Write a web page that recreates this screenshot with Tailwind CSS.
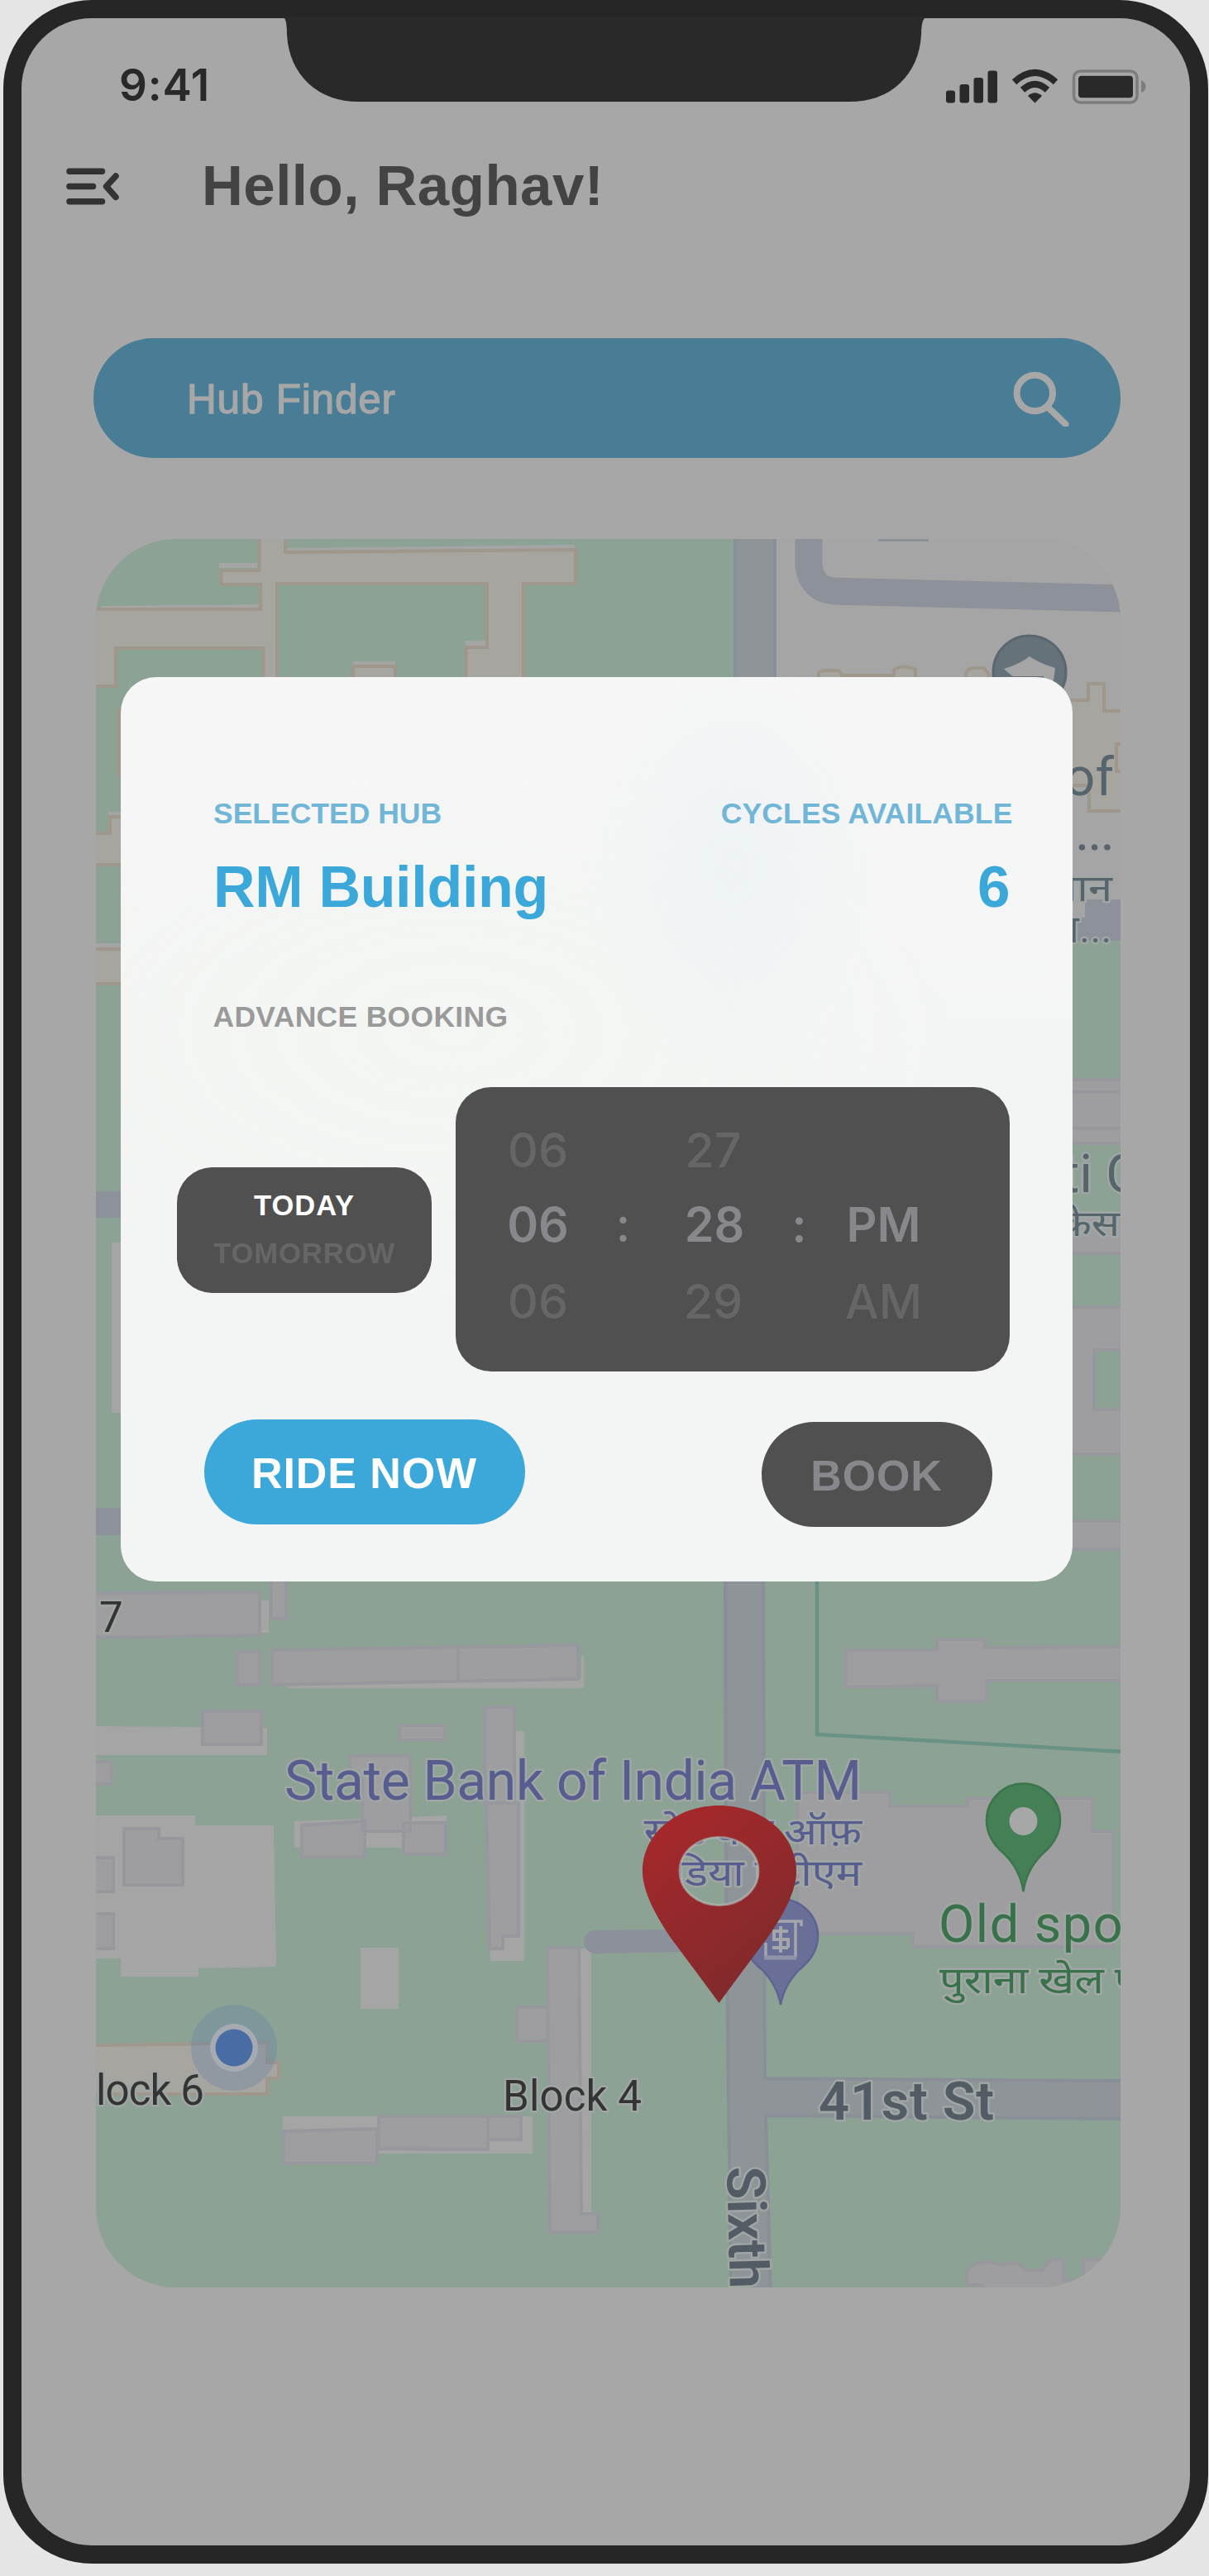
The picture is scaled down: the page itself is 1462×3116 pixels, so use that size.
<!DOCTYPE html>
<html lang="en">
<head>
<meta charset="utf-8">
<title>Hub Finder</title>
<script src="https://cdn.jsdelivr.net/npm/@tailwindcss/browser@4"></script>
</head>
<body class="w-[1462px] h-[3116px] overflow-hidden bg-[#e5e5e5] font-['Liberation_Sans',Arial,sans-serif]">
<div class="relative ml-1 w-[1457px] h-[3101px] rounded-[107px] border-[22px] border-[#262626] bg-[#a7a7a7]">

  <!-- Notch -->
  <svg class="absolute left-[318px] -top-[2px]" width="774" height="104" viewBox="344 20 774 104" fill="#292929"><path d="M344 20V22Q347 26 347 42Q349 78 373 101Q397 123 434 123H1026Q1065 123 1088 101Q1112 78 1114 42Q1114 26 1118 22V20Z"/></svg>

  <!-- Status bar -->
  <div class="flex justify-between items-start pt-[55px] pl-[118px] pr-[52px] h-[107px]">
    <div class="text-[53px] leading-none font-semibold tracking-[0.8px] font-['Inter',sans-serif] text-[#292929]">9:41</div>
    <svg class="mt-[6px]" width="244" height="44" viewBox="1143 83 244 44">
      <g fill="#292929">
        <rect x="1144" y="109.5" width="11" height="15" rx="3"/><rect x="1160.5" y="102" width="11.5" height="22.500" rx="3"/><rect x="1177.500" y="94" width="11.500" height="30.500" rx="3"/><rect x="1194.500" y="85.500" width="11.500" height="39" rx="3"/>
        <path d="M1251.500 124.500L1243 116Q1251.500 108.500 1260 116Z"/>
        <rect x="1304" y="91.800" width="66" height="26.500" rx="4"/>
      </g>
      <g fill="none" stroke="#292929" stroke-width="8"><path d="M1226.500 99.200Q1251.500 76.500 1276.500 99.200"/><path d="M1236.500 108.800Q1251.500 95 1266.500 108.800"/></g>
      <rect x="1298.500" y="86" width="76.500" height="38" rx="8" fill="none" stroke="#7d7d7d" stroke-width="3.500"/>
      <path d="M1380 97.500Q1385.500 99 1385.500 104.700T1380 112Z" fill="#7d7d7d"/>
    </svg>
  </div>

  <!-- Header -->
  <header class="flex items-center mt-[62px] pl-[53px] h-[70px]">
    <svg width="66" height="46" viewBox="79 202 66 46" fill="none" stroke="#333" stroke-width="7.500" stroke-linecap="round" stroke-linejoin="round"><path d="M84 206.300H123.500M84 224.500H112.500M84 242.800H123.500M140 212L128.500 224.500L140 237.500"/></svg>
    <h1 class="ml-[99px] pb-[3px] text-[69px] leading-none font-bold tracking-[0.5px] text-[#434343]">Hello, Raghav!</h1>
  </header>

  <!-- Search -->
  <div class="flex items-center justify-between mt-[148px] ml-[87px] w-[1242px] h-[145px] rounded-full bg-[#487d95] pl-[113px] pr-[61px]">
    <span class="pt-[2px] text-[49.500px] leading-none tracking-[0.8px] text-[#a7a7a7] [-webkit-text-stroke:1.3px_#a7a7a7]">Hub Finder</span>
    <svg width="70" height="68" viewBox="1224 448 70 68" fill="none" stroke="#a7a7a7" stroke-width="8"><circle cx="1251.300" cy="475.500" r="21.700"/><path d="M1267 492.500L1271.500 497"/><path d="M1272.500 497.500L1288.500 513" stroke-linecap="round"/></svg>
  </div>

  <!-- Map -->
  <div class="mt-[98px] ml-[90px] w-[1239px] h-[2115px] rounded-[97px] overflow-hidden bg-[#8ca294]">
    <svg class="block" width="1239" height="2115" viewBox="116 652 1239 2115">
      <defs>
        <linearGradient id="pin" x1="0" y1="0" x2="0.600" y2="1"><stop offset="0.100" stop-color="#a6282b"/><stop offset="1" stop-color="#802a2c"/></linearGradient>
      </defs>
      <!-- open ground -->
      <g fill="#a5a5a5">
        <path d="M938 640H1360V1138H938Z"/>
        <path d="M135 1503H150V1709H135ZM316 1936H325V1975H316ZM348 2030H703V2042H348ZM703 2003H706V2042H703ZM116 2088L323 2090V2123H116ZM622 2094H634V2372H593V2340H622ZM356 2203L540 2196V2235H356Z"/>
        <path d="M110 2196H236V2208H331L334 2379L240 2381V2391H146V2369H110ZM436 2356H482V2430H436ZM702 2357H715V2678H702ZM342 2560H457V2580H342ZM457 2590L590 2598V2560H644V2605H457Z"/>
        <path d="M122 733L315 731V737H122ZM347 663L695 659V665L347 668ZM265 681H311V687H265ZM427 800H478V805H427ZM563 775H588V781H563ZM131 982H146V987H131ZM116 1141H146V1147H116Z"/>
      </g>
      <!-- campus walkways -->
      <g fill="#a7a59f" stroke="#9f978b" stroke-width="4">
        <path d="M110 737H315V707H267.500V690H313.600V640H345V668L696 665V706H633V840H563.500V783H589V706H335V840H318.500V784H140V830H110Z"/>
        <path d="M427 840V806H478V840M110 1008H133V988H155V1046H110ZM110 1148H155V1190H110ZM144 856V940"/>
        <path d="M990 830V814Q992 811 1000 811H1015L1018 817H1081V810Q1092 803 1107 810V830M1168 830V815Q1170 808 1178 808H1190L1196 816V830M1290 847H1316V827H1335V860H1360V981H1317V950H1290"/>
        <path d="M1360 900H1350V933H1360" fill="none"/>
        <path d="M110 2474L323 2471V2495H337V2514H323V2533H110Z"/>
      </g>
      <!-- roads -->
      <g fill="#8f9499" stroke="#898f96" stroke-width="4">
        <path d="M889 640H937V830H889Z"/>
        <path d="M877 1900H923L925 2514L1360 2517V2563L926 2559L932 2780H884L878 2300Z"/>
      </g>
      <path d="M978 640V684Q982 714 1010 715L1360 724" fill="none" stroke="#8d929a" stroke-width="33"/>
      <path d="M1062 650H1123V655H1062ZM1312 1088H1360V1138H1290V1110H1312ZM110 1441H150V1473H110ZM110 1824H150V1857H110Z" fill="#8d919a"/>
      <path d="M878 2333L720 2335A14 14 0 0 0 720 2363L878 2360Z" fill="#8c909a"/>
      <path d="M988 1900V2098L1360 2119" fill="none" stroke="#689384" stroke-width="4.500"/>
      <!-- buildings -->
      <g fill="#9e9ea0" stroke="#97979e" stroke-width="4">
        <path d="M1280 1306H1365V1383H1280ZM1280 1321H1365M1280 1365H1365M1280 1469H1365V1516H1280ZM1280 1581H1365V1633H1323V1705H1365V1759H1280ZM1280 1840H1365V1874H1280Z"/>
        <path d="M110 1927L314 1926V1978L110 1981ZM328 1900H346V1958H328ZM287 1998H314V2038H287ZM329 1996L699 1990V2031L329 2038ZM554 1994V2034M245 2070H316V2110H245ZM110 2131H135V2158H110ZM483 2087H538V2105H483Z"/>
        <path d="M423 2124H496V2215H438V2150H423ZM365 2208L441 2203V2246H365ZM488 2205H539V2243H488ZM586 2065H622V2181H627V2342H608V2357H592L588 2181H586ZM588 2181H622"/>
        <path d="M150 2212H192V2224H221V2280H150ZM110 2247H137V2288H110ZM110 2315H137V2357H110ZM662 2356H700L703 2678H723V2700H665ZM625 2428H662V2469H625ZM343 2578L456 2575V2617H343ZM458 2560H590V2600L458 2599ZM590 2560H630V2588H590Z"/>
        <path d="M1023 1996H1133V1983H1191V1993L1360 1992V2033H1193V2058H1133V2039L1023 2041Z"/>
        <path d="M964 2168H1076V2185H1170V2175H1321V2215H1346V2355H1104V2339H964Z"/>
        <path d="M1188 2775V2764H1169V2748Q1176 2735 1196 2736L1212 2740Q1230 2732 1242 2746H1260L1272 2733H1286V2758H1310V2733H1365V2775Z"/>
      </g>
      <!-- school marker -->
      <circle cx="1245" cy="813" r="44" fill="#66727a" stroke="#5a676e" stroke-width="3"/>
      <path d="M1245 794Q1256 802 1276 808L1273 830H1267L1262 818H1225L1222 816L1214 809Q1234 803 1245 794Z" fill="#a5a5a5"/>
      <!-- location dot -->
      <circle cx="283" cy="2477" r="52" fill="#5c7ea8" fill-opacity="0.300"/>
      <circle cx="283" cy="2477" r="29" fill="#a5abb0"/><circle cx="283" cy="2477" r="22.500" fill="#4a6ca4"/>
      <!-- labels -->
      <g font-family="Roboto, 'Noto Sans', 'Noto Sans Devanagari', sans-serif" stroke="#a0a6a3" stroke-width="5" stroke-linejoin="round" paint-order="stroke">
        <g fill="#56646b">
          <text x="1347" y="962" font-size="65" text-anchor="end" stroke="none">of</text>
          <text x="1301" y="1028" font-size="55" stroke="none" font-weight="500">...</text>
          <text transform="translate(1345 1090) scale(1.190 1)" font-size="44" text-anchor="end">स्थान</text>
          <text x="1345" y="1140" font-size="46" text-anchor="end" letter-spacing="1">व...</text>
          <text x="1284" y="1442" font-size="65">ti C</text>
          <text transform="translate(1354 1495) scale(1.150 1)" font-size="44" text-anchor="end">केस</text>
        </g>
        <g fill="#343434" font-size="51">
          <text x="120" y="1974">7</text>
          <text x="116" y="2546" textLength="131">lock 6</text>
          <text x="608" y="2553" textLength="168">Block 4</text>
        </g>
        <g fill="#585d8f">
          <text x="344" y="2177" font-size="66" textLength="698">State Bank of India ATM</text>
          <text transform="translate(1042 2231) scale(1.190 1)" font-size="44" text-anchor="end">स्टेट बैंक ऑफ़</text>
          <text transform="translate(1042 2281) scale(1.190 1)" font-size="44" text-anchor="end">इंडिया एटीएम</text>
        </g>
        <g fill="#38714a">
          <text x="1135" y="2349" font-size="63" letter-spacing="1.500">Old spo</text>
          <text transform="translate(1136 2411) scale(1.190 1)" font-size="44">पुराना खेल प</text>
        </g>
        <g fill="#535c65" font-weight="600" font-size="65">
          <text x="990" y="2564" textLength="212">41st St</text>
          <text transform="translate(879 2621) rotate(88.500)">Sixth</text>
        </g>
      </g>
      <!-- park pin -->
      <path d="M1237.500 2288Q1234 2262 1215 2243Q1193 2225 1193 2202A44.500 44.500 0 0 1 1282 2202Q1282 2225 1260 2243Q1241 2262 1237.500 2288Z" fill="#457f55" stroke="#3b754b" stroke-width="2.500"/>
      <circle cx="1237.500" cy="2203" r="17" fill="#a5a8a6"/>
      <!-- bank pin -->
      <path d="M944 2425Q940 2402 922 2383Q899 2365 899 2342A45 45 0 0 1 989 2342Q989 2365 966 2383Q948 2402 944 2425Z" fill="#6a6f98" stroke="#5e638f" stroke-width="2.500"/>
      <path d="M926 2350V2368M962 2368V2324M926 2324H969V2330" fill="none" stroke="#a5a5ac" stroke-width="3.500"/>
      <path d="M924 2368H963" stroke="#9194a8" stroke-width="5"/>
      <path d="M934 2336H953M934 2346H955M934 2356H953M936 2334V2346M953 2346V2356M944 2330V2362" fill="none" stroke="#a5a5ac" stroke-width="4"/>
      <!-- selected hub pin -->
      <path fill-rule="evenodd" fill="url(#pin)" d="M869.500 2423Q864 2415 811 2344Q777 2294 777 2264C777 2218 818 2184 869.500 2184S963 2218 963 2264Q963 2294 928 2344Q875 2415 869.500 2423ZM869.500 2222A48 41.500 0 1 0 869.500 2305A48 41.500 0 1 0 869.500 2222Z"/>
      <ellipse cx="869.500" cy="2263.500" rx="47.500" ry="41" fill="none" stroke="#b5b9b6" stroke-opacity="0.600" stroke-width="3"/>
    </svg>
  </div>

  <!-- Booking dialog -->
  <section class="absolute left-[119.500px] top-[796.500px] w-[1151.500px] h-[1094px] rounded-[43px] bg-[#f4f5f5] bg-[radial-gradient(ellipse_180px_260px_at_740px_230px,#eff3f5,#eff3f500),radial-gradient(ellipse_600px_330px_at_400px_430px,#f3f6f2,#f3f6f200),linear-gradient(#f6f6f6,#f3f5f4_50%)]">
    <div class="flex justify-between pt-[148px] pl-[112.500px] pr-[72.500px] leading-none font-bold">
      <div class="flex flex-col gap-[36px]">
        <span class="text-[35.500px] text-[#71b6d7]">SELECTED HUB</span>
        <span class="text-[70px] leading-none tracking-[-0.300px] text-[#3ca8da]">RM Building</span>
      </div>
      <div class="flex flex-col gap-[36px] items-end">
        <span class="text-[35.500px] tracking-[0.150px] text-[#71b6d7]">CYCLES AVAILABLE</span>
        <span class="text-[71px] leading-[70px] pr-[3px] text-[#3ca8da]">6</span>
      </div>
    </div>
    <div class="mt-[105px] pl-[112px] text-[35.500px] leading-none font-bold tracking-[0.300px] text-[#9a9a9a]">ADVANCE BOOKING</div>
    <div class="flex items-center gap-[29px] mt-[66px] pl-[68.500px]">
      <div class="flex flex-col items-center w-[308px] h-[152px] mt-[2px] pt-[29px] gap-[24px] rounded-[43px] bg-[#505050] text-[34.500px] leading-none font-bold tracking-[1px]">
        <span class="text-white">TODAY</span>
        <span class="text-[#666]">TOMORROW</span>
      </div>
      <div class="grid grid-cols-[101px_105px_113px_95px_109px] grid-rows-[90px_93px_57px] justify-items-center w-[670px] h-[344px] pt-[48px] pl-[49px] rounded-[43px] bg-[#505050] font-['Inter',sans-serif] text-[57.500px] leading-none font-medium text-[#666]">
        <span>06</span><span></span><span>27</span><span></span><span></span>
        <span class="font-semibold text-[#87878c]">06</span><span class="text-[#87878c]">:</span><span class="pl-[3px] font-semibold text-[#87878c]">28</span><span class="font-semibold text-[#87878c]">:</span><span class="font-semibold text-[#87878c]">PM</span>
        <span>06</span><span></span><span>29</span><span></span><span>AM</span>
      </div>
    </div>
    <div class="flex justify-between mt-[58px] pl-[101px] pr-[97.500px] text-[52px] leading-none font-bold">
      <button class="w-[388px] h-[127px] pt-[3px] rounded-full bg-[#3ca8da] tracking-[0.900px] text-white">RIDE NOW</button>
      <button class="w-[279px] h-[127px] mt-[3.500px] pt-[3px] rounded-full bg-[#505050] tracking-[0.900px] text-[#87878c]">BOOK</button>
    </div>
  </section>
</div>
</body>
</html>
